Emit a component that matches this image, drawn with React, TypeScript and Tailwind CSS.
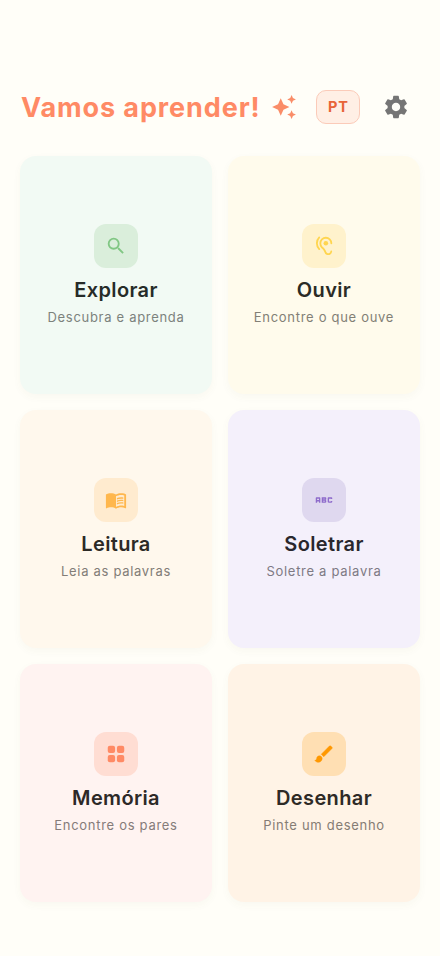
import type { ReactNode } from "react";
import { MdAbc, MdAutoAwesome, MdMenuBook, MdSearch, MdSettings } from "react-icons/md";

function GridIcon() {
  return (
    <svg viewBox="0 0 24 24" width="22" height="22" fill="currentColor">
      <rect x="3" y="3" width="8" height="8" rx="2.200" />
      <rect x="13" y="3" width="8" height="8" rx="2.200" />
      <rect x="3" y="13" width="8" height="8" rx="2.200" />
      <rect x="13" y="13" width="8" height="8" rx="2.200" />
    </svg>
  );
}

function BrushIcon() {
  return (
    <svg viewBox="0 0 24 24" width="22" height="22" fill="currentColor" stroke="currentColor" strokeWidth="0.500" strokeLinejoin="round">
      <path d="M7 14c-1.660 0-3 1.340-3 3 0 1.310-1.160 2-2 2 .92 1.220 2.490 2 4 2 2.210 0 4-1.790 4-4 0-1.660-1.340-3-3-3z" />
      <path d="M20.710 4.630l-1.340-1.340a1 1 0 0 0-1.410 0L9 12.250 11.750 15l8.960-8.960a1 1 0 0 0 0-1.410z" />
    </svg>
  );
}

function HearingIcon() {
  return (
    <svg viewBox="0 0 24 24" width="22" height="22" fill="none" stroke="currentColor" strokeWidth="2" strokeLinecap="round">
      <path d="M20 9a6 6 0 0 0-12 0c0 1.600.5 3.100 1.500 4.100 1.300 1.400 2.700 2.100 3.400 4.200.6 1.800 1.100 2.700 2.300 3.300 1.900.9 4.500-.2 4.700-2.600" />
      <path d="M6.800 2.700a9 9 0 0 0 0 12.600" />
      <circle cx="14" cy="9" r="2.500" fill="currentColor" stroke="none" />
    </svg>
  );
}

type Activity = { title: string; subtitle: string; card: string; tile: string; text: string; sub: string; icon: ReactNode };

const activities: Activity[] = [
  { title: "Explorar", subtitle: "Descubra e aprenda", card: "bg-[#f2faf4]", tile: "bg-[#daeedb] text-[#81c784]", text: "text-[#262b28]", sub: "text-[#7c827d]", icon: <MdSearch size={22} /> },
  { title: "Ouvir", subtitle: "Encontre o que ouve", card: "bg-[#fffbec]", tile: "bg-[#fff2cc] text-[#ffd54f]", text: "text-[#2b2b26]", sub: "text-[#827f76]", icon: <HearingIcon /> },
  { title: "Leitura", subtitle: "Leia as palavras", card: "bg-[#fff8ed]", tile: "bg-[#ffebcf] text-[#ffb74d]", text: "text-[#2c2a26]", sub: "text-[#827d77]", icon: <MdMenuBook size={22} /> },
  { title: "Soletrar", subtitle: "Soletre a palavra", card: "bg-[#f4f0fb]", tile: "bg-[#dfd8ef] text-[#8e6bcb]", text: "text-[#29272d]", sub: "text-[#7e7a84]", icon: <MdAbc size={22} /> },
  { title: "Memória", subtitle: "Encontre os pares", card: "bg-[#fff3f1]", tile: "bg-[#ffddd3] text-[#ff8a65]", text: "text-[#2d2928]", sub: "text-[#857b7a]", icon: <GridIcon /> },
  { title: "Desenhar", subtitle: "Pinte um desenho", card: "bg-[#fff3e6]", tile: "bg-[#ffdfb3] text-[#ff9800]", text: "text-[#2e2a26]", sub: "text-[#857c74]", icon: <BrushIcon /> },
];

export default function App() {
  return (
    <div className="flex h-[956px] w-[440px] flex-col bg-[#fffef8] px-5 pt-[82px] font-['Inter','Liberation_Sans',sans-serif]">
      <header className="flex h-[50px] items-center">
        <h1 className="w-[251px] whitespace-nowrap pl-px text-[27px] leading-none font-[680] tracking-[0.9px] text-[#ff8a65]">Vamos aprender!</h1>
        <MdAutoAwesome size={26} className="shrink-0 text-[#fa8d68]" />
        <button className="ml-[19px] flex h-[34px] w-11 shrink-0 items-center justify-center rounded-[10px] border border-[#fbcbb9] bg-[#ffefe5] pl-px text-[14.5px] font-bold tracking-[0.9px] text-[#e86438]">PT</button>
        <button className="ml-[22px] flex size-7 shrink-0 items-center justify-center text-[#757575]" aria-label="Configurações">
          <MdSettings size={28} />
        </button>
      </header>
      <main className="mt-6 grid grid-cols-2 gap-4">
        {activities.map((a) => (
          <button key={a.title} className={`flex h-[238px] flex-col items-center rounded-2xl pt-[68px] shadow-[0_3px_8px_rgba(100,90,60,0.04)] ${a.card}`}>
            <span className={`flex size-11 items-center justify-center rounded-xl ${a.tile}`}>{a.icon}</span>
            <span className={`mt-2 text-xl leading-7 font-[560] tracking-[0.36px] ${a.text}`}>{a.title}</span>
            <span className={`mt-1 whitespace-nowrap text-[13px] leading-[18px] tracking-[0.7px] ${a.sub}`}>{a.subtitle}</span>
          </button>
        ))}
      </main>
    </div>
  );
}
